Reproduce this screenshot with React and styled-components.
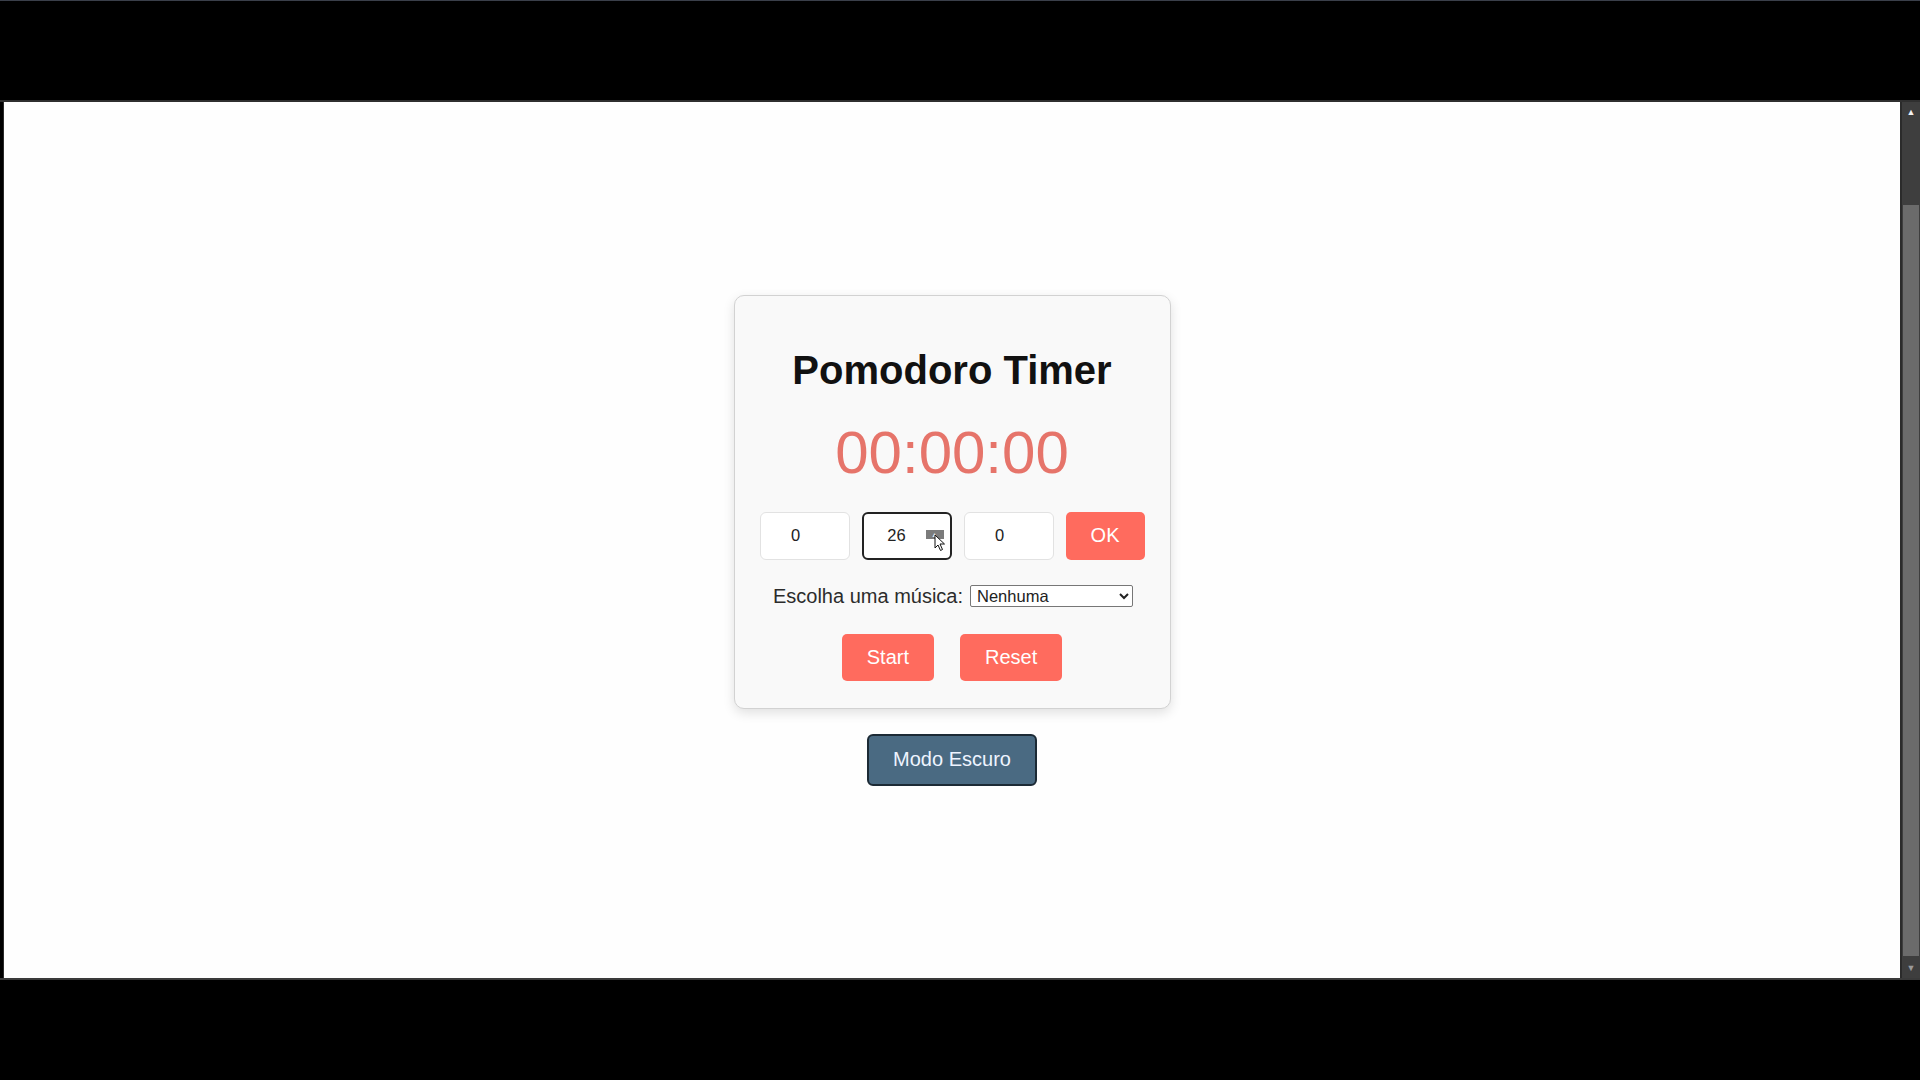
import React from 'react';
import styled, { createGlobalStyle } from 'styled-components';

const GlobalStyle = createGlobalStyle`
  html, body {
    margin: 0;
    padding: 0;
    background: #000;
  }
  body {
    font-family: "Liberation Sans", Arial, sans-serif;
  }
`;

const Screen = styled.div`
  width: 1920px;
  height: 1080px;
  display: flex;
  flex-direction: column;
  background: #000;
  overflow: hidden;
`;

const TopBar = styled.div`
  box-sizing: border-box;
  height: 102px;
  background: #000;
  border-top: 1px solid #3a3f4a;
  border-bottom: 2px solid #2f2f2f;
`;

const Middle = styled.div`
  display: flex;
  height: 876px;
`;

const LeftEdge = styled.div`
  width: 4px;
  background: #000;
  border-right: 1px solid #2a2a2a;
  box-sizing: border-box;
`;

const Viewport = styled.main`
  flex: 1;
  display: flex;
  flex-direction: column;
  align-items: center;
  justify-content: center;
  background: #fefefe;
  border-right: 2px solid #2b2b2b;
`;

const Scrollbar = styled.div`
  width: 18px;
  display: flex;
  flex-direction: column;
  background: #3e3e3e;
`;

const ScrollArrow = styled.div`
  height: 20px;
  display: flex;
  align-items: center;
  justify-content: center;
  color: ${p => (p.$muted ? '#9a9a9a' : '#f2f2f2')};
  font-size: 9px;
  line-height: 1;
`;

const ScrollTrack = styled.div`
  flex: 1;
  display: flex;
  flex-direction: column;
  padding: 83px 1px 0;
`;

const ScrollThumb = styled.div`
  height: 751px;
  background: #6b6b6b;
`;

const BottomBar = styled.div`
  flex: 1;
  background: #000;
  border-top: 2px solid #3a3a3a;
`;

const Card = styled.section`
  box-sizing: border-box;
  width: 437px;
  display: flex;
  flex-direction: column;
  align-items: center;
  gap: 25px;
  padding: 52px 25px 27px;
  background: #f9f9f9;
  border: 1px solid #d2d2d2;
  border-radius: 10px;
  box-shadow: 0 4px 12px rgba(0, 0, 0, 0.12);
`;

const Title = styled.h1`
  margin: 0;
  font-size: 40px;
  font-weight: 700;
  color: #111;
`;

const Clock = styled.div`
  font-size: 60px;
  color: #e6746a;
`;

const InputRow = styled.div`
  display: flex;
  align-self: stretch;
  justify-content: space-between;
`;

const InputWrap = styled.div`
  position: relative;
`;

const TimeInput = styled.input`
  box-sizing: border-box;
  width: 90px;
  height: 48px;
  padding: 0 ${p => (p.$focused ? '20px' : '18px')} 0 0;
  font-family: "Liberation Sans", Arial, sans-serif;
  font-size: 16.5px;
  color: #222;
  text-align: center;
  background: #fff;
  border: ${p => (p.$focused ? '2px solid #232323' : '1px solid #e2e2e2')};
  border-radius: 6px;
  outline: none;
`;

const SpinUp = styled.div`
  position: absolute;
  top: 18px;
  right: 8px;
  width: 18px;
  height: 9px;
  display: flex;
  align-items: center;
  justify-content: center;
  background: #7b7b7b;
  color: #e8e8e8;
  font-size: 7px;
  line-height: 1;
`;

const Pointer = styled.svg`
  position: absolute;
  top: 22px;
  right: 6px;
  pointer-events: none;
`;

const ActionButton = styled.button`
  height: ${p => (p.$tall ? '48px' : '47px')};
  padding: 0 25px;
  font-family: "Liberation Sans", Arial, sans-serif;
  font-size: 20px;
  color: #fff;
  background: #ff6b5e;
  border: none;
  border-radius: 5px;
`;

const MusicRow = styled.div`
  display: flex;
  align-items: center;
  gap: 7px;
  margin-left: 2px;
`;

const MusicLabel = styled.label`
  font-size: 20px;
  color: #2c2c2c;
`;

const MusicSelect = styled.select`
  box-sizing: border-box;
  width: 163px;
  height: 22px;
  padding: 0 2px;
  font-family: "Liberation Sans", Arial, sans-serif;
  font-size: 16.5px;
  color: #222;
  background: #fff;
  border: 1px solid #777;
  border-radius: 2px;
`;

const ButtonRow = styled.div`
  display: flex;
  gap: 26px;
  margin-top: 1px;
`;

const ThemeButton = styled.button`
  margin-top: 25px;
  height: 52px;
  padding: 0 24px;
  font-family: "Liberation Sans", Arial, sans-serif;
  font-size: 20px;
  color: #eef4ff;
  background: #4a6a82;
  border: 2px solid #1c2a35;
  border-radius: 6px;
`;

export default function App() {
  return (
    <>
      <GlobalStyle />
      <Screen>
        <TopBar />
        <Middle>
          <LeftEdge />
          <Viewport>
            <Card>
              <Title>Pomodoro Timer</Title>
              <Clock>00:00:00</Clock>
              <InputRow>
                <TimeInput type="text" defaultValue="0" />
                <InputWrap>
                  <TimeInput type="text" defaultValue="26" $focused />
                  <SpinUp>▲</SpinUp>
                  <Pointer width="12" height="18" viewBox="0 0 12 18">
                    <path d="M1 1 L1 14 L4 11 L6.5 16.5 L8.5 15.5 L6 10 L10.5 10 Z" fill="#fff" stroke="#111" strokeWidth="1" />
                  </Pointer>
                </InputWrap>
                <TimeInput type="text" defaultValue="0" />
                <ActionButton $tall>OK</ActionButton>
              </InputRow>
              <MusicRow>
                <MusicLabel htmlFor="music">Escolha uma música:</MusicLabel>
                <MusicSelect id="music" defaultValue="none">
                  <option value="none">Nenhuma</option>
                </MusicSelect>
              </MusicRow>
              <ButtonRow>
                <ActionButton>Start</ActionButton>
                <ActionButton>Reset</ActionButton>
              </ButtonRow>
            </Card>
            <ThemeButton>Modo Escuro</ThemeButton>
          </Viewport>
          <Scrollbar>
            <ScrollArrow>▲</ScrollArrow>
            <ScrollTrack>
              <ScrollThumb />
            </ScrollTrack>
            <ScrollArrow $muted>▼</ScrollArrow>
          </Scrollbar>
        </Middle>
        <BottomBar />
      </Screen>
    </>
  );
}
